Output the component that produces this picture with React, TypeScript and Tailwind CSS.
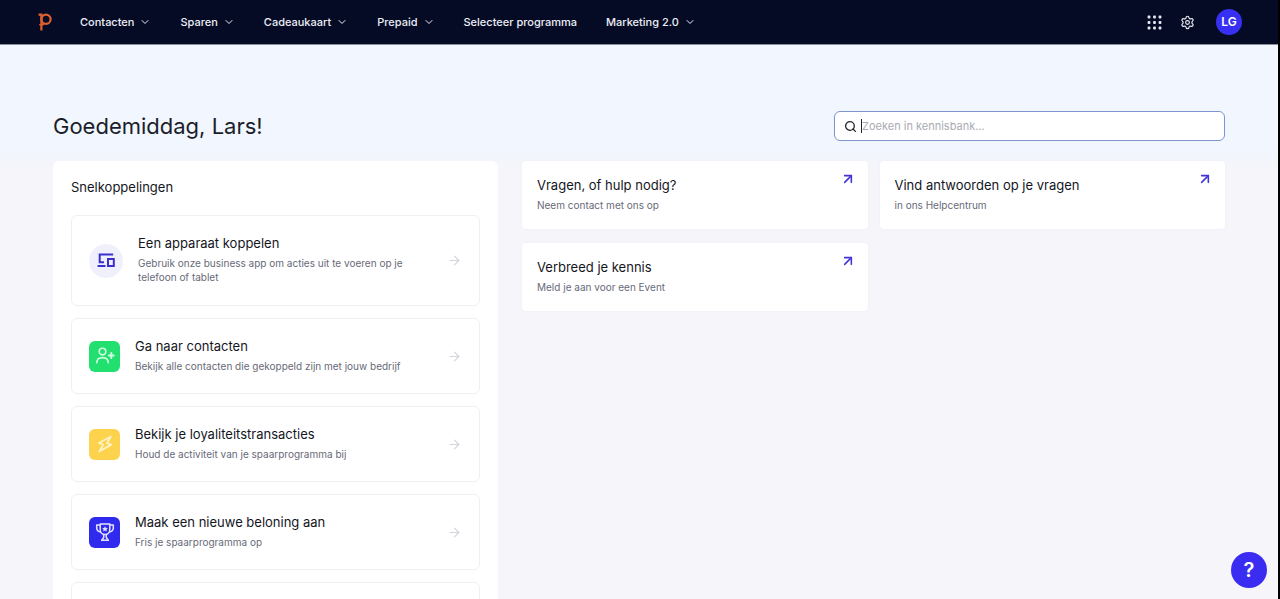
import { ArrowRight, ArrowUpRight, ChevronDown, Search, Settings } from 'lucide-react';
import type { ReactNode } from 'react';

const navItems = [
  { label: 'Contacten', menu: true },
  { label: 'Sparen', menu: true },
  { label: 'Cadeaukaart', menu: true },
  { label: 'Prepaid', menu: true },
  { label: 'Selecteer programma', menu: false },
  { label: 'Marketing 2.0', menu: true },
];

function Logo() {
  return (
    <svg viewBox="0 0 14 18" className="h-[18px] w-[14px]" fill="none" stroke="#e0602f" strokeWidth="2.2">
      <path d="M0.5 1.6H3.4V17.4" />
      <circle cx="8" cy="6.2" r="4.6" />
      <path d="M1.2 11.6H6" strokeWidth="1.4" />
    </svg>
  );
}

function GridDots() {
  const steps = [2, 7.5, 13];
  return (
    <svg viewBox="0 0 15 15" className="size-[15px]" fill="#e6e8f2">
      {steps.map((y) => steps.map((x) => <rect key={`${x}-${y}`} x={x - 1.4} y={y - 1.4} width="2.8" height="2.8" rx="0.9" />))}
    </svg>
  );
}

function Header() {
  return (
    <header className="flex h-[45px] shrink-0 items-center border-b border-[#8b909c] bg-[#060b25] pr-9 pl-[38px] text-[#eceef6]">
      <a href="#home" aria-label="Home" className="mr-7">
        <Logo />
      </a>
      <nav className="flex items-center gap-[29px]">
        {navItems.map((item) =>
          item.menu ? (
            <button key={item.label} type="button" className="flex items-center gap-[5px] text-[11px] font-medium">
              {item.label}
              <ChevronDown className="size-3" strokeWidth={2} />
            </button>
          ) : (
            <a key={item.label} href="#programma" className="text-[11px] font-medium">
              {item.label}
            </a>
          ),
        )}
      </nav>
      <div className="ml-auto flex items-center">
        <button type="button" aria-label="Apps" className="mr-[18px]">
          <GridDots />
        </button>
        <button type="button" aria-label="Instellingen" className="mr-[21px]">
          <Settings className="size-[15px]" strokeWidth={1.8} />
        </button>
        <button type="button" className="size-[26px] rounded-full bg-[#3730f2] text-xs font-semibold text-white">
          LG
        </button>
      </div>
    </header>
  );
}

function DevicesIcon() {
  return (
    <svg viewBox="0 0 18 15" className="h-[15px] w-[18px]" fill="none" stroke="#3a2fd0" strokeWidth="2">
      <path d="M16.2 1.500H2.700V9.300H7" />
      <path d="M0.600 13H8.500" />
      <rect x="11" y="6" width="5.800" height="7" />
    </svg>
  );
}

function ContactIcon() {
  return (
    <svg viewBox="0 0 20 20" className="size-5" fill="none" stroke="#d2ffe2" strokeWidth="1.6" strokeLinecap="round">
      <circle cx="7.500" cy="5.600" r="3.300" />
      <path d="M1.800 16.800C1.800 13.400 4.200 11.600 7.500 11.600S13.200 13.400 13.200 16.800" />
      <path d="M16.300 7.100V11.900M13.900 9.500H18.700" strokeWidth="2" />
    </svg>
  );
}

function BoltIcon() {
  return (
    <svg viewBox="0 0 20 20" className="size-5" fill="none" stroke="#fff3c4" strokeWidth="1.8" strokeLinejoin="round">
      <path d="M15.800 2.500L4 9L8.200 10.600L4.300 17.500L16.300 10.600L12 9.200Z" />
    </svg>
  );
}

function TrophyIcon() {
  return (
    <svg viewBox="0 0 20 20" className="size-5" fill="none" stroke="#e4e3ff" strokeWidth="1.5" strokeLinejoin="round">
      <path d="M5.200 2H14.800V7.500C14.800 10.500 12.600 12.600 10 12.600S5.200 10.500 5.200 7.500Z" />
      <path d="M5 3H1.700V6C1.700 8.400 3.400 9.700 6 10M15 3H18.300V6C18.300 8.400 16.600 9.700 14 10" />
      <path d="M8.700 12.700V15.500L7 18M11.300 12.700V15.500L13 18M6 18.200H14" />
      <path d="M10 4.200L10.900 6L12.900 6.200L11.400 7.500L11.900 9.500L10 8.500L8.100 9.500L8.600 7.500L7.100 6.200L9.100 6Z" fill="#e4e3ff" stroke="none" />
    </svg>
  );
}

type Shortcut = { title: string; text: string; icon: ReactNode; tile: string; row: string };

const shortcuts: Shortcut[] = [
  {
    title: 'Een apparaat koppelen',
    text: 'Gebruik onze business app om acties uit te voeren op je telefoon of tablet',
    icon: <DevicesIcon />,
    tile: 'size-[34px] rounded-full bg-[#f0f0fc]',
    row: 'min-h-[91px]',
  },
  {
    title: 'Ga naar contacten',
    text: 'Bekijk alle contacten die gekoppeld zijn met jouw bedrijf',
    icon: <ContactIcon />,
    tile: 'size-[31px] rounded-md bg-[#22e070]',
    row: 'min-h-[76px]',
  },
  {
    title: 'Bekijk je loyaliteitstransacties',
    text: 'Houd de activiteit van je spaarprogramma bij',
    icon: <BoltIcon />,
    tile: 'size-[31px] rounded-md bg-[#fdd24c]',
    row: 'min-h-[76px]',
  },
  {
    title: 'Maak een nieuwe beloning aan',
    text: 'Fris je spaarprogramma op',
    icon: <TrophyIcon />,
    tile: 'size-[31px] rounded-md bg-[#3029ee]',
    row: 'min-h-[76px]',
  },
];

function Shortcuts() {
  return (
    <section className="rounded-md bg-white px-[18px] pt-4">
      <h2 className="text-[13px] leading-5 text-[#14161e]">Snelkoppelingen</h2>
      <ul className="mt-[18px] flex flex-col gap-3">
        {shortcuts.map((s) => (
          <li key={s.title}>
            <a href="#snelkoppeling" className={`flex items-center rounded-md border border-[#f0f0f2] px-[17px] ${s.row}`}>
              <span className={`flex shrink-0 items-center justify-center ${s.tile}`}>{s.icon}</span>
              <span className="ml-[15px] flex max-w-[280px] flex-col pb-1">
                <span className="text-[13px] leading-5 text-[#14161e]">{s.title}</span>
                <span className="mt-[3px] text-[10px] leading-[14px] text-[#686a78]">{s.text}</span>
              </span>
              <ArrowRight className="ml-auto size-[15px] shrink-0 text-[#d3d4d9]" strokeWidth={1.8} />
            </a>
          </li>
        ))}
        <li className="min-h-[76px] rounded-md border border-[#f0f0f2]" />
      </ul>
    </section>
  );
}

const helpCards = [
  { title: 'Vragen, of hulp nodig?', text: 'Neem contact met ons op' },
  { title: 'Vind antwoorden op je vragen', text: 'in ons Helpcentrum' },
  { title: 'Verbreed je kennis', text: 'Meld je aan voor een Event' },
];

export default function App() {
  return (
    <div className="flex h-screen flex-col overflow-hidden border-r-2 border-black bg-[#f5f5fa] font-['Inter',sans-serif]">
      <Header />
      <main className="min-h-0 flex-1 overflow-hidden bg-linear-to-b from-[#f1f6ff] from-[100px] to-[#f5f5fa] to-[124px] px-[53px] pt-[66px]">
        <div className="flex items-center justify-between">
          <h1 className="text-[22px] leading-[30px] text-[#1b1e29]">Goedemiddag, Lars!</h1>
          <label className="flex h-[30px] w-[391px] items-center gap-1 rounded-md border border-[#7f93cf] bg-white pl-[9px]">
            <Search className="size-[13px] text-[#22242c]" strokeWidth={2.4} />
            <span className="h-3.5 w-px bg-[#22242c]" />
            <input
              type="search"
              aria-label="Zoeken in kennisbank"
              placeholder="Zoeken in kennisbank..."
              className="-ml-1 min-w-0 flex-1 bg-transparent text-[11px] outline-none placeholder:text-[#a9abb3]"
            />
          </label>
        </div>
        <div className="mt-5 grid grid-cols-[445fr_703fr] items-start gap-6">
          <Shortcuts />
          <div className="grid grid-cols-2 gap-x-3 gap-y-3.5">
            {helpCards.map((card) => (
              <a key={card.title} href="#hulp" className="flex h-[68px] items-start justify-between rounded-sm bg-white pt-3.5 pr-3 pl-[15px] shadow-[0_0_2px_#ebebf1]">
                <span className="flex flex-col">
                  <span className="text-[13px] leading-5 text-[#14161e]">{card.title}</span>
                  <span className="mt-[3px] text-[10px] leading-[14px] text-[#686a78]">{card.text}</span>
                </span>
                <ArrowUpRight className="-mt-1 size-4 text-[#4335d8]" strokeWidth={2.4} />
              </a>
            ))}
          </div>
        </div>
      </main>
      <button type="button" aria-label="Help" className="fixed right-[13px] bottom-[11px] size-9 rounded-full bg-[#3a2cf0] text-xl font-semibold text-white">
        ?
      </button>
    </div>
  );
}
